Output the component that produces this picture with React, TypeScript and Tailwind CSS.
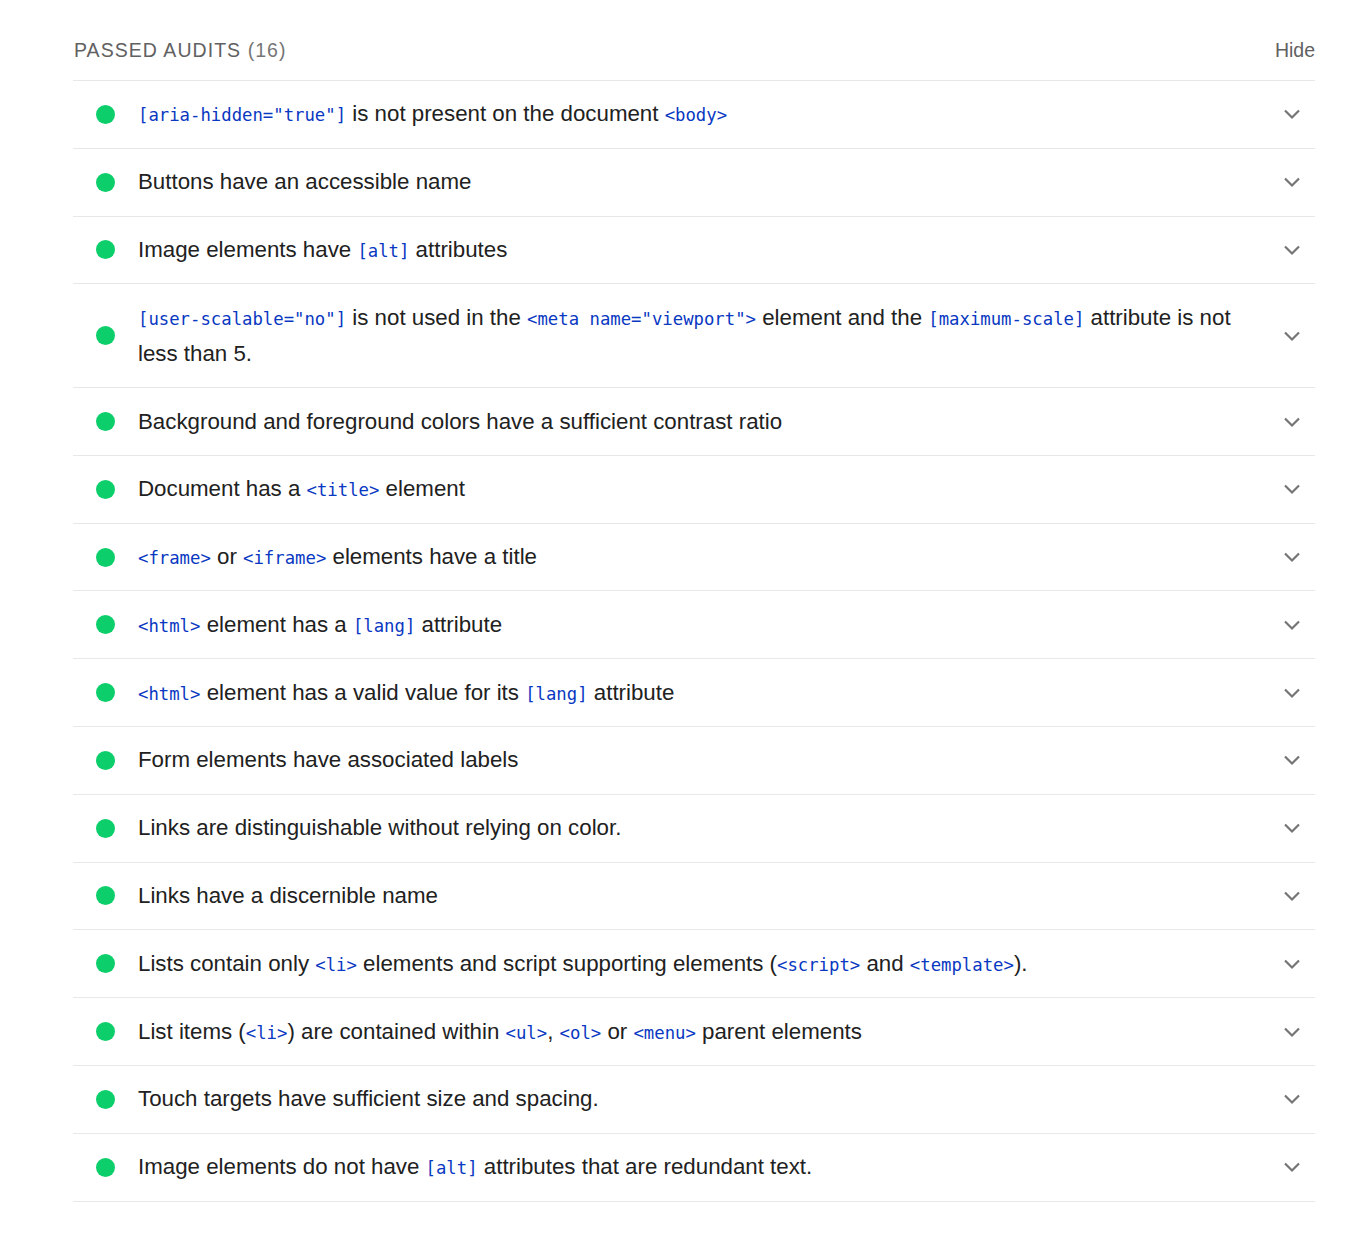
import React from "react";

type Part = string | { c: string };
const c = (s: string) => ({ c: s });

const audits: Part[][] = [
  [c('[aria-hidden="true"]'), " is not present on the document ", c("<body>")],
  ["Buttons have an accessible name"],
  ["Image elements have ", c("[alt]"), " attributes"],
  [
    c('[user-scalable="no"]'),
    " is not used in the ",
    c('<meta name="viewport">'),
    " element and the ",
    c("[maximum-scale]"),
    " attribute is not less than 5.",
  ],
  ["Background and foreground colors have a sufficient contrast ratio"],
  ["Document has a ", c("<title>"), " element"],
  [c("<frame>"), " or ", c("<iframe>"), " elements have a title"],
  [c("<html>"), " element has a ", c("[lang]"), " attribute"],
  [c("<html>"), " element has a valid value for its ", c("[lang]"), " attribute"],
  ["Form elements have associated labels"],
  ["Links are distinguishable without relying on color."],
  ["Links have a discernible name"],
  [
    "Lists contain only ",
    c("<li>"),
    " elements and script supporting elements (",
    c("<script>"),
    " and ",
    c("<template>"),
    ").",
  ],
  ["List items (", c("<li>"), ") are contained within ", c("<ul>"), ", ", c("<ol>"), " or ", c("<menu>"), " parent elements"],
  ["Touch targets have sufficient size and spacing."],
  ["Image elements do not have ", c("[alt]"), " attributes that are redundant text."],
];

function Chevron() {
  return (
    <svg width="24" height="24" viewBox="0 0 24 24" fill="none" className="shrink-0">
      <path d="M5 8.5l7 7 7-7" stroke="#757575" strokeWidth="2.2" strokeLinecap="butt" strokeLinejoin="miter" />
    </svg>
  );
}

export default function App() {
  return (
    <div className="min-h-[1238px] bg-white font-['Liberation_Sans',Arial,sans-serif]">
      <div className="ml-[73px] w-[1242px] pt-[38px]">
        <div className="flex items-center justify-between pb-[18px] pl-[1px]">
          <div className="text-[19.5px] leading-[24px] tracking-[1.05px] text-[#616161]">
            PASSED AUDITS <span className="text-[#757575]">(16)</span>
          </div>
          <div className="text-[19.5px] leading-[24px] text-[#616161]">Hide</div>
        </div>
        <div className="border-t border-[#e8e8e8]">
          {audits.map((parts, i) => (
            <div key={i} className="flex items-center border-b border-[#e8e8e8] py-[15.4px]">
              <div className="flex w-[65px] shrink-0 justify-center">
                <div className="h-[19px] w-[19px] rounded-full bg-[#0cce6b]" />
              </div>
              <div className="flex-1 pr-[40px] text-[22.3px] leading-[36px] text-[#212121]">
                {parts.map((p, j) =>
                  typeof p === "string" ? (
                    <span key={j}>{p}</span>
                  ) : (
                    <code
                      key={j}
                      className="font-['DejaVu_Sans_Mono',monospace] text-[17.3px] leading-none text-[#0938c2]"
                    >
                      {p.c}
                    </code>
                  )
                )}
              </div>
              <div className="flex w-[35px] shrink-0 justify-start">
                <Chevron />
              </div>
            </div>
          ))}
        </div>
      </div>
    </div>
  );
}
